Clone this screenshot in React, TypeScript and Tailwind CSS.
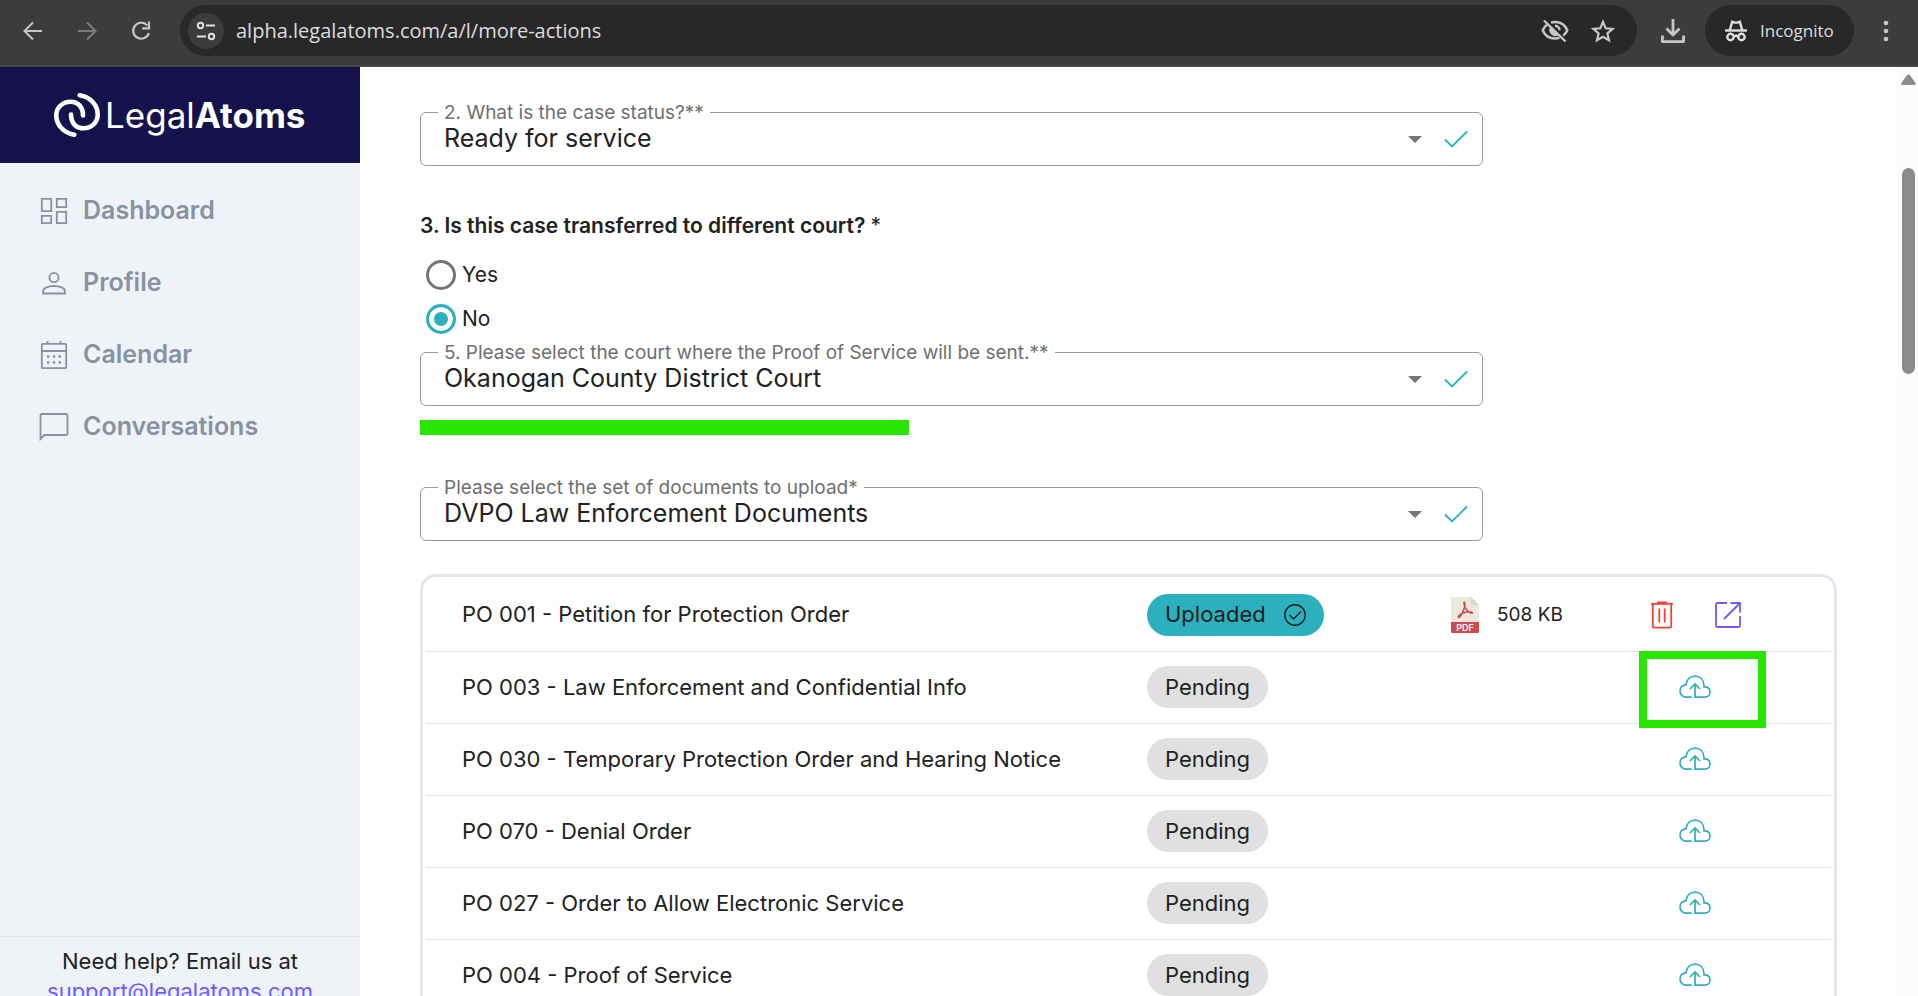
import { ReactNode } from 'react';

interface SelectFieldProps {
  id: string;
  label: string;
  value: string;
}

interface DocumentItem {
  name: string;
  size?: string;
}

const documents: DocumentItem[] = [
  { name: 'PO 001 - Petition for Protection Order', size: '508 KB' },
  { name: 'PO 003 - Law Enforcement and Confidential Info' },
  { name: 'PO 030 - Temporary Protection Order and Hearing Notice' },
  { name: 'PO 070 - Denial Order' },
  { name: 'PO 027 - Order to Allow Electronic Service' },
  { name: 'PO 004 - Proof of Service' },
];

function BrowserBar() {
  return (
    <header className="flex h-[67px] shrink-0 items-start border-b-2 border-[#484848] bg-[#3c3c3c] pt-[5px] pr-5 font-['Open_Sans',sans-serif] text-[#dedede]">
      <div className="flex h-[51px] w-[180px] shrink-0 items-center gap-6 pl-[18px]">
        <button aria-label="Back" className="flex w-[30px] justify-center">
          <svg width="20" height="20" viewBox="0 0 20 20" fill="none" stroke="#c7c7c7" strokeWidth="2">
            <path d="M19 10H2M10 1.5L1.5 10L10 18.5" />
          </svg>
        </button>
        <button aria-label="Forward" className="flex w-[30px] justify-center">
          <svg width="20" height="20" viewBox="0 0 20 20" fill="none" stroke="#7d7d7d" strokeWidth="2">
            <path d="M1 10H18M10 1.5L18.5 10L10 18.5" />
          </svg>
        </button>
        <button aria-label="Reload" className="flex w-[30px] justify-center">
          <svg width="20" height="20" viewBox="0 0 20 20" fill="none" stroke="#c7c7c7" strokeWidth="2.2">
            <path d="M16.2 4.4A8 8 0 1 0 17.9 12M18 0.5V7.3H11.2" />
          </svg>
        </button>
      </div>
      <div className="flex h-[51px] min-w-0 flex-1 items-center rounded-full bg-[#282828] pl-2">
        <button aria-label="Site information" className="flex size-9 items-center justify-center rounded-full bg-[#3c3c3c]">
          <svg width="20" height="20" viewBox="0 0 20 20" fill="none" stroke="#e0e0e0" strokeWidth="2">
            <circle cx="4.5" cy="4.5" r="2.7" />
            <path d="M10 4.5H19M1 15.5H10" />
            <circle cx="15.5" cy="15.5" r="2.7" />
          </svg>
        </button>
        <input
          aria-label="Address"
          defaultValue="alpha.legalatoms.com/a/l/more-actions"
          className="ml-3 min-w-0 flex-1 bg-transparent text-[20px] leading-7 outline-none"
        />
        <button aria-label="Third-party cookies blocked" className="mr-[22px]">
          <svg width="28" height="24" viewBox="0 0 28 24" fill="none" stroke="#c7c7c7" strokeWidth="2.4">
            <path d="M3 1.5L24.5 22.5" />
            <path d="M10 3.6A14 14 0 0 1 14 3C19.6 3 24.2 6.3 26.3 11.2A13 13 0 0 1 22.2 16.6M18.5 18.7A13.5 13.5 0 0 1 14 19.5C8.4 19.5 3.8 16.2 1.7 11.2A13 13 0 0 1 6 5.7" />
            <path d="M14 6.8a4.5 4.5 0 0 1 4.5 4.5" />
            <path d="M9.8 9.2L16.2 15.6A5 5 0 0 1 9.8 9.2Z" fill="#c7c7c7" />
          </svg>
        </button>
        <button aria-label="Bookmark this tab" className="mr-[22px]">
          <svg width="24" height="24" viewBox="0 0 24 24" fill="none" stroke="#c7c7c7" strokeWidth="2.2">
            <path d="M12 2.8L14.7 9.3L21.7 9.9L16.4 14.5L18 21.3L12 17.7L6 21.3L7.6 14.5L2.3 9.9L9.3 9.3Z" />
          </svg>
        </button>
      </div>
      <div className="flex h-[51px] shrink-0 items-center">
        <button aria-label="Downloads" className="mr-5 ml-6">
          <svg width="24" height="24" viewBox="0 0 24 24" fill="none" stroke="#c7c7c7" strokeWidth="2.8">
            <path d="M12 0V15.5M5.5 9.5L12 16L18.5 9.5M1.4 16.5V22.6H22.6V16.5" strokeLinejoin="round" />
          </svg>
        </button>
        <button className="flex h-[51px] w-[149px] items-center gap-[13px] rounded-full bg-[#282828] pl-5 text-[17px]">
          <svg width="22" height="22" viewBox="0 0 22 22" fill="none" stroke="#dedede" strokeWidth="2.4">
            <path d="M0 10.5H22" />
            <path d="M4.8 10L7.2 1.8L11 2.8L14.8 1.8L17.2 10" />
            <circle cx="5.5" cy="17" r="3.2" />
            <circle cx="16.5" cy="17" r="3.2" />
            <path d="M8.5 16.5Q11 15 13.5 16.5" />
          </svg>
          Incognito
        </button>
        <button aria-label="Menu" className="ml-5">
          <svg width="24" height="24" viewBox="0 0 24 24" fill="#c7c7c7">
            <circle cx="12" cy="4" r="2.3" />
            <circle cx="12" cy="12" r="2.3" />
            <circle cx="12" cy="20" r="2.3" />
          </svg>
        </button>
      </div>
    </header>
  );
}

function Logo() {
  return (
    <a href="#" className="flex h-24 shrink-0 items-center bg-[#15124b] pl-[54px] text-[35px] text-white">
      <svg width="46" height="46" viewBox="0 0 46 46" fill="none" stroke="#fff" strokeWidth="4.6" strokeLinecap="round">
        <path d="M25.7 3.3C36 5 44 13 43.7 23C43.5 31 37 36.3 29.5 36.3C22 36.3 17 31 17 22.5" />
        <path d="M20.3 42.7C10 41 2 33 2.3 23C2.5 15 9 9.7 16.5 9.7C24 9.7 29 15 29 23.5" />
      </svg>
      <span className="ml-[5px]">Legal</span>
      <span className="font-bold">Atoms</span>
    </a>
  );
}

function NavItem({ icon, label }: { icon: ReactNode; label: string }) {
  return (
    <a href="#" className="flex h-[72px] items-center gap-3.5 pl-[39px] text-[25px] font-semibold text-[#8792a2]">
      <svg width="30" height="30" viewBox="0 0 30 30" fill="none" stroke="#8792a2" strokeWidth="1.8">
        {icon}
      </svg>
      {label}
    </a>
  );
}

function Sidebar() {
  return (
    <aside className="flex w-[360px] shrink-0 flex-col bg-[#eff3f8]">
      <Logo />
      <nav className="flex-1 pt-3">
        <NavItem
          label="Dashboard"
          icon={
            <path d="M2.8 2.8H12.2V15.2H2.8ZM17.8 2.8H27.2V11.2H17.8ZM2.8 19.8H12.2V27.2H2.8ZM17.8 15.8H27.2V27.2H17.8Z" />
          }
        />
        <NavItem
          label="Profile"
          icon={
            <>
              <circle cx="15" cy="9.5" r="4.6" />
              <path d="M4 25.5V23.5C4 20 9 18 15 18S26 20 26 23.5V25.5Z" />
            </>
          }
        />
        <NavItem
          label="Calendar"
          icon={
            <>
              <rect x="2.8" y="3.8" width="24.4" height="24.4" rx="1" />
              <path d="M2.8 11H27.2M8.5 1V4M21.5 1V4" />
              <path d="M8 16.5h2.4M13.8 16.5h2.4M19.6 16.5h2.4M8 22.5h2.4M13.8 22.5h2.4M19.6 22.5h2.4" strokeWidth="2.4" />
            </>
          }
        />
        <NavItem
          label="Conversations"
          icon={<path d="M1.5 27V3.5Q1.5 2 3 2H27Q28.5 2 28.5 3.5V21.5Q28.5 23 27 23H5.5Z" />}
        />
      </nav>
      <div className="h-[60px] shrink-0 overflow-hidden border-t border-[#dfe3e9] pt-[9px] text-center text-[22px] leading-[30px]">
        <p>Need help? Email us at</p>
        <a href="mailto:support@legalatoms.com" className="text-[#6c5cff]">
          support@legalatoms.com
        </a>
      </div>
    </aside>
  );
}

function SelectField({ id, label, value }: SelectFieldProps) {
  return (
    <div className="relative flex h-[54px] w-3/4 items-center rounded-md border border-[#9b9b9b]">
      <label htmlFor={id} className="absolute -top-3 left-[17px] bg-white px-1.5 text-[19px] leading-6 text-[#6f6f6f]">
        {label}
      </label>
      <select id={id} defaultValue={value} className="h-full min-w-0 flex-1 appearance-none bg-transparent pl-[23px] text-[25px] outline-none">
        <option>{value}</option>
      </select>
      <svg className="pointer-events-none mr-[22px]" width="14" height="7" viewBox="0 0 14 7" fill="#757575">
        <path d="M0 0H14L7 7Z" />
      </svg>
      <svg className="mr-3.5" width="24" height="18" viewBox="0 0 24 18" fill="none" stroke="#2db0bd" strokeWidth="1.8">
        <path d="M1 9.5L8 16.5L23 1.5" />
      </svg>
    </div>
  );
}

function RadioOption({ label, checked }: { label: string; checked?: boolean }) {
  return (
    <label className="flex h-11 items-center gap-1.5 pl-1.5 text-[21px]">
      <input
        type="radio"
        name="transferred"
        defaultChecked={checked}
        className="size-[30px] appearance-none rounded-full border-3 border-[#757575] checked:border-[#2db0bd] checked:bg-[#2db0bd] checked:shadow-[inset_0_0_0_5px_white]"
      />
      {label}
    </label>
  );
}

function PdfIcon() {
  return (
    <svg width="28" height="36" viewBox="0 0 28 36">
      <path d="M1 0H20L28 8V25H0V1Q0 0 1 0Z" fill="#e9e9e0" />
      <path d="M20 0V8H28Z" fill="#d9d7ca" />
      <path d="M0 25H28V35Q28 36 27 36H1Q0 36 0 35Z" fill="#cc4b4c" />
      <path
        d="M7.5 20.5C9.5 21 13 13 14 8.5C14.5 5 12.500 4 13 7C13.5 11 18 16.5 21 16.2C22.5 15.5 19 14 15.5 15C11 16 6.5 18.5 7.5 20.5Z"
        fill="none"
        stroke="#cc4b4c"
        strokeWidth="1.5"
      />
      <text x="14" y="33.5" textAnchor="middle" fontSize="9" fontWeight="600" fill="#fff" fontFamily="Inter, sans-serif">
        PDF
      </text>
    </svg>
  );
}

function UploadIcon() {
  return (
    <svg width="32" height="24" viewBox="0 0 32 24" fill="none" stroke="#2db0bd" strokeWidth="1.7">
      <path d="M12.5 22.2H7.5C3.5 22.2 1 19.5 1 16C1 12.5 3.5 10 7 9.8C7.5 4.5 11 1.2 16 1.2C21 1.2 24.8 4.5 25 10.5V12C28.5 11.5 31 13.5 31 17C31 20 29 22.2 26 22.2H16V9.5M11 14L16 9L21 14" />
    </svg>
  );
}

function DocumentRow({ name, size }: DocumentItem) {
  return (
    <tr className="h-[72px] border-b border-[#dfe3e9]">
      <td className="pl-9">{name}</td>
      <td>
        {size ? (
          <span className="inline-flex h-[42px] items-center gap-[18px] rounded-full bg-[#2db0bd] px-[18px] align-middle">
            Uploaded
            <svg width="22" height="22" viewBox="0 0 22 22" fill="none" stroke="#212121" strokeWidth="1.4">
              <circle cx="11" cy="11" r="10.2" />
              <path d="M5.5 11L9.5 15L17 7.5" />
            </svg>
          </span>
        ) : (
          <span className="inline-flex h-[42px] items-center rounded-full bg-[#e0e0e0] px-[18px] align-middle">Pending</span>
        )}
      </td>
      <td>
        {size && (
          <span className="flex items-center gap-[18px] text-[19px]">
            <PdfIcon />
            {size}
          </span>
        )}
      </td>
      <td className="pr-[72px]">
        {size ? (
          <div className="flex items-center justify-center gap-[41px]">
            <button aria-label={`Delete ${name}`}>
              <svg width="24" height="28" viewBox="0 0 24 28" fill="none" stroke="#f44336" strokeWidth="1.8">
                <path d="M1 2.8H23M7 1.5H17M2.8 3V25Q2.8 26.6 4.4 26.6H19.6Q21.2 26.6 21.2 25V3M9.3 7.5V21.5M14.7 7.5V21.5" />
              </svg>
            </button>
            <button aria-label={`Open ${name}`}>
              <svg width="26" height="26" viewBox="0 0 26 26" fill="none" stroke="#6c5cff" strokeWidth="1.8">
                <path d="M12 1H2.5Q1 1 1 2.5V23.5Q1 25 2.5 25H23.5Q25 25 25 23.5V14M15.5 1H25V10.5M25 1L9 17" />
              </svg>
            </button>
          </div>
        ) : (
          <button aria-label={`Upload ${name}`} className="flex w-full justify-center">
            <UploadIcon />
          </button>
        )}
      </td>
    </tr>
  );
}

export default function App() {
  return (
    <div className="flex h-screen flex-col overflow-hidden bg-white font-['Inter',sans-serif] text-[#212121]">
      <BrowserBar />
      <div className="flex min-h-0 flex-1">
        <Sidebar />
        <main className="min-w-0 flex-1 overflow-hidden px-15 pt-[45px]">
          <SelectField id="status" label="2. What is the case status?**" value="Ready for service" />

          <fieldset className="mt-[45px]">
            <legend className="mb-3 text-[21px] leading-[30px] font-semibold">
              3. Is this case transferred to different court? <span className="font-normal">*</span>
            </legend>
            <RadioOption label="Yes" />
            <RadioOption label="No" checked />
          </fieldset>

          <div className="mt-[11px]">
            <SelectField
              id="court"
              label="5. Please select the court where the Proof of Service will be sent.**"
              value="Okanogan County District Court"
            />
          </div>
          <div className="mt-3.5 mb-[52px] h-[15px] w-[489px] bg-[#28e600]" />

          <SelectField
            id="documents"
            label="Please select the set of documents to upload*"
            value="DVPO Law Enforcement Documents"
          />

          <div className="relative mt-[33px] rounded-2xl border-3 border-[#e1e7ee] p-[3px] pt-0.5">
            <table className="w-full table-fixed text-[22px]">
              <colgroup>
                <col />
                <col className="w-76" />
                <col className="w-45" />
                <col className="w-50" />
              </colgroup>
              <tbody>
                {documents.map((doc) => (
                  <DocumentRow key={doc.name} name={doc.name} size={doc.size} />
                ))}
              </tbody>
            </table>
            <div className="pointer-events-none absolute top-[74px] right-[68px] h-[77px] w-[127px] border-8 border-[#28e600]" />
          </div>
        </main>
        <div className="flex w-[21px] shrink-0 flex-col items-center bg-[#fcfcfc] pt-[7px] pl-0.5">
          <svg width="15" height="11" viewBox="0 0 15 11" fill="#8b8b8b">
            <path d="M1.5 11Q-0.5 10.5 0.6 8.8L6.2 0.9Q7.5 -0.5 8.8 0.9L14.4 8.8Q15.5 10.5 13.5 11Z" />
          </svg>
          <div className="mt-[83px] h-[206px] w-[13px] rounded-full bg-[#8b8b8b]" />
        </div>
      </div>
    </div>
  );
}
